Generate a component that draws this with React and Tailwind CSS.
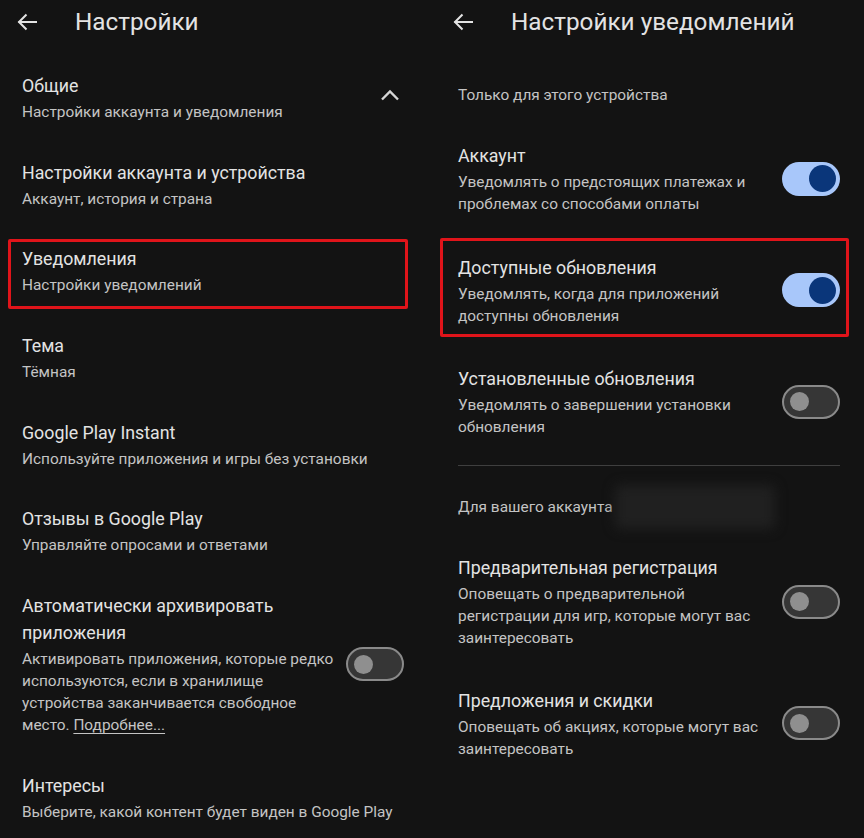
import React from "react";

const FONT = { fontFamily: "Roboto, 'Noto Sans', sans-serif" };

function BackArrow() {
  return (
    <svg width="20" height="18" viewBox="0 0 20 18" fill="none" stroke="#e3e3e3" strokeWidth="2" strokeLinecap="square">
      <path d="M19 9H2.5" />
      <path d="M9.5 1.5L2 9l7.5 7.5" strokeLinecap="butt" />
    </svg>
  );
}

function ChevronUp() {
  return (
    <svg width="20" height="12" viewBox="0 0 20 12" fill="none" stroke="#d6d6d6" strokeWidth="2.4">
      <path d="M2 10.5L10 2.5l8 8" />
    </svg>
  );
}

function Toggle({ on }) {
  if (on) {
    return (
      <div className="w-[58px] h-[34px] shrink-0 rounded-full bg-[#a8c7fa] flex items-center justify-end pr-[4px]">
        <div className="w-[27px] h-[27px] rounded-full bg-[#0a367a]" />
      </div>
    );
  }
  return (
    <div className="w-[58px] h-[34px] shrink-0 rounded-full bg-[#363636] border-[2.5px] border-[#8a8a8a] flex items-center pl-[6px]">
      <div className="w-[19px] h-[19px] rounded-full bg-[#8f8f8f]" />
    </div>
  );
}

const T = "text-[17.8px] leading-[27px] text-[#e3e3e3] whitespace-nowrap";
const S = "text-[15.4px] leading-[22px] text-[#c4c4c4] whitespace-nowrap";

function Item({ title, sub }) {
  const titles = Array.isArray(title) ? title : [title];
  const subs = Array.isArray(sub) ? sub : [sub];
  return (
    <div>
      {titles.map((t, i) => (
        <div key={i} className={T}>{t}</div>
      ))}
      <div className="mt-[2px]">
        {subs.map((s, i) => (
          <div key={i} className={S}>{s}</div>
        ))}
      </div>
    </div>
  );
}

function ToggleItem({ title, sub, on }) {
  return (
    <div className="flex items-center justify-between">
      <Item title={title} sub={sub} />
      <Toggle on={on} />
    </div>
  );
}

function LeftPanel() {
  return (
    <div className="w-[432px] shrink-0 pl-[22px] pr-[28px]">
      <div className="h-[44px] flex items-center">
        <div className="-ml-[5px] w-[58px] flex items-center"><BackArrow /></div>
        <div className="text-[24.3px] text-[#e3e3e3]">Настройки</div>
      </div>
      <div className="mt-[28px] flex flex-col gap-[35.7px]">
        <div className="flex items-center justify-between">
          <Item title="Общие" sub="Настройки аккаунта и уведомления" />
          <div className="mr-[4px] mt-[-6px]"><ChevronUp /></div>
        </div>
        <Item title="Настройки аккаунта и устройства" sub="Аккаунт, история и страна" />
        <div className="relative">
          <div className="absolute left-[-14px] w-[400px] top-[-6px] bottom-[-13px] border-[3px] border-[#e0141a] rounded-[2px]" />
          <Item title="Уведомления" sub="Настройки уведомлений" />
        </div>
        <Item title="Тема" sub="Тёмная" />
        <Item title="Google Play Instant" sub="Используйте приложения и игры без установки" />
        <Item title="Отзывы в Google Play" sub="Управляйте опросами и ответами" />
        <div className="flex items-center justify-between">
          <div>
            <div className={T}>Автоматически архивировать</div>
            <div className={T}>приложения</div>
            <div className="mt-[2px]">
              <div className={S}>Активировать приложения, которые редко</div>
              <div className={S}>используются, если в хранилище</div>
              <div className={S}>устройства заканчивается свободное</div>
              <div className={S}>место. <span className="underline underline-offset-[3px]">Подробнее...</span></div>
            </div>
          </div>
          <Toggle on={false} />
        </div>
        <Item title="Интересы" sub="Выберите, какой контент будет виден в Google Play" />
      </div>
    </div>
  );
}

function RightPanel() {
  return (
    <div className="w-[432px] shrink-0 pl-[26px] pr-[24px]">
      <div className="h-[44px] flex items-center">
        <div className="-ml-[5px] w-[58px] flex items-center"><BackArrow /></div>
        <div className="text-[24.3px] text-[#e3e3e3]">Настройки уведомлений</div>
      </div>
      <div className="mt-[41px] text-[15.4px] leading-[20px] text-[#c4c4c4]">Только для этого устройства</div>
      <div className="mt-[37px] flex flex-col gap-[38.5px]">
        <ToggleItem on title="Аккаунт" sub={["Уведомлять о предстоящих платежах и", "проблемах со способами оплаты"]} />
        <div className="relative">
          <div className="absolute left-[-18px] right-[-9px] top-[-16px] bottom-[-10px] border-[3px] border-[#e0141a] rounded-[2px]" />
          <ToggleItem on title="Доступные обновления" sub={["Уведомлять, когда для приложений", "доступны обновления"]} />
        </div>
        <ToggleItem title="Установленные обновления" sub={["Уведомлять о завершении установки", "обновления"]} />
      </div>
      <div className="mt-[27px] h-px bg-[#3f3f3f]" />
      <div className="mt-[31px] h-[20px] flex items-center text-[15.4px] leading-[20px] text-[#c4c4c4] whitespace-nowrap">
        <span>Для вашего аккаунта</span>
        <span className="ml-[2px] -my-[12px] inline-block w-[160px] h-[44px] bg-[#202020] blur-[6px] rounded-md" />
      </div>
      <div className="mt-[37px] flex flex-col gap-[37.5px]">
        <ToggleItem title="Предварительная регистрация" sub={["Оповещать о предварительной", "регистрации для игр, которые могут вас", "заинтересовать"]} />
        <ToggleItem title="Предложения и скидки" sub={["Оповещать об акциях, которые могут вас", "заинтересовать"]} />
      </div>
    </div>
  );
}

export default function App() {
  return (
    <div className="w-[864px] h-[838px] bg-[#131313] flex overflow-hidden" style={FONT}>
      <LeftPanel />
      <RightPanel />
    </div>
  );
}
